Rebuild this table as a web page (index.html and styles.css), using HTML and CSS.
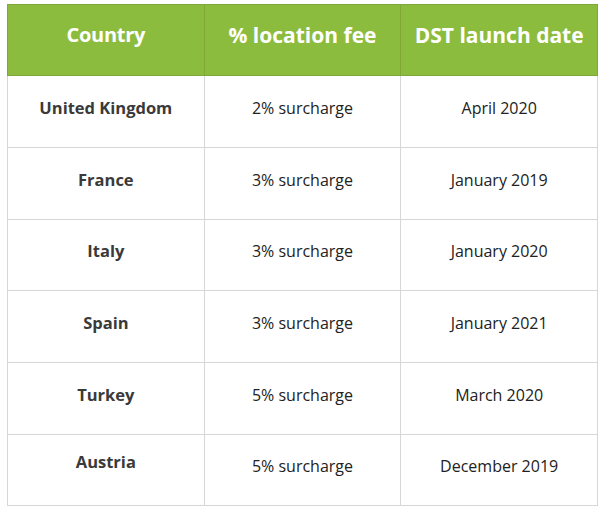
FILE: index.html
```html
<!DOCTYPE html>
<html>
<head>
<meta charset="utf-8">
<link rel="stylesheet" href="styles.css">
</head>
<body>
<div class="wrap">
<table class="fees">
<thead>
<tr><th>Country</th><th>% location fee</th><th>DST launch date</th></tr>
</thead>
<tbody>
<tr><td class="name">United Kingdom</td><td>2% surcharge</td><td>April 2020</td></tr>
<tr><td class="name">France</td><td>3% surcharge</td><td>January 2019</td></tr>
<tr class="short"><td class="name">Italy</td><td>3% surcharge</td><td>January 2020</td></tr>
<tr><td class="name">Spain</td><td>3% surcharge</td><td>January 2021</td></tr>
<tr><td class="name">Turkey</td><td>5% surcharge</td><td>March 2020</td></tr>
<tr class="short"><td class="name up">Austria</td><td>5% surcharge</td><td>December 2019</td></tr>
</tbody>
</table>
</div>
</body>
</html>
```
FILE: styles.css
```css
html, body { margin: 0; padding: 0; background: #fff; }
.wrap { padding: 4px 0 0 7px; }
.fees {
  border-collapse: collapse;
  width: 591px;
  table-layout: fixed;
  font-family: "Open Sans", sans-serif;
}
.fees th {
  background: #8cbc3e;
  color: #fff;
  font-weight: 700;
  font-size: 21px;
  height: 71px;
  padding: 0 0 11px 0;
  box-sizing: border-box;
  border: 1px solid #7fa838;
  text-align: center;
  vertical-align: middle;
}
.fees th:first-child { letter-spacing: -0.3px; font-size: 20px; }
.fees td {
  height: 72px;
  box-sizing: border-box;
  padding: 0 0 8px 0;
  border: 1px solid #d6d6d6;
  text-align: center;
  vertical-align: middle;
  font-size: 16px;
  color: #222;
}
.fees tr.short td { height: 71px; }
.fees td.name { font-weight: 700; font-size: 16.5px; color: #3a3a3a; }
.fees tr.short td.name { padding-bottom: 10px; }
.fees tr.short td.up { padding-bottom: 18px; }
```
